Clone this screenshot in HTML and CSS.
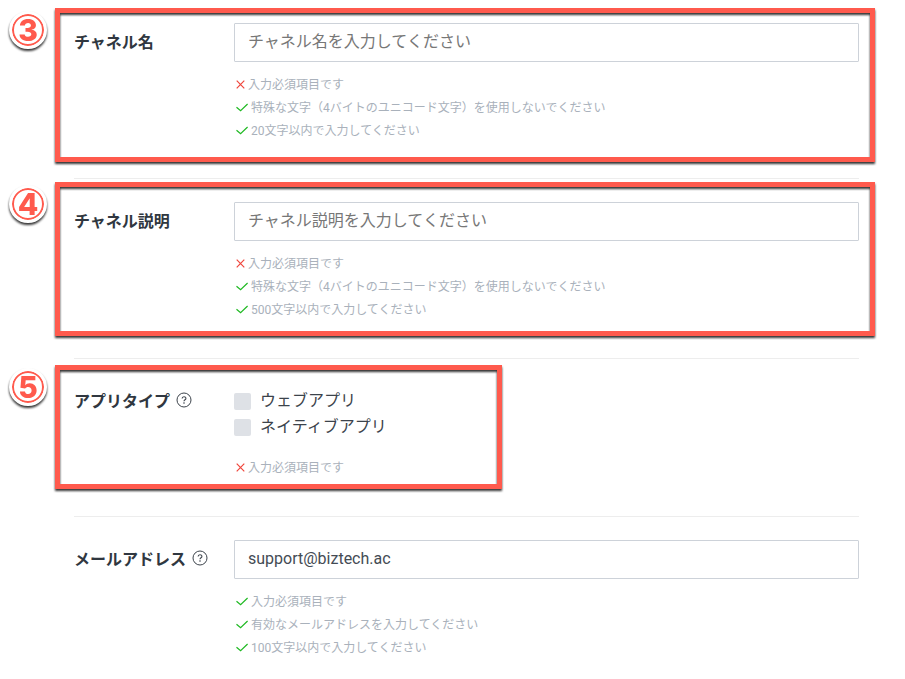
FILE: index.html
```html
<!DOCTYPE html>
<html lang="ja">
<head>
    <meta charset="UTF-8">
    <meta name="viewport" content="width=device-width, initial-scale=1.0">
    <title>チャネル作成</title>
    <link rel="stylesheet" href="styles.css">
</head>
<body>
    <!-- Shared icons -->
    <svg class="sprite" aria-hidden="true">
        <symbol id="icon-check" viewBox="0 0 12 12">
            <path d="M0.5 6.2 L4.6 9.8 L11.6 3" fill="none" stroke="#1fb922" stroke-width="1.2"/>
        </symbol>
        <symbol id="icon-cross" viewBox="0 0 9 12">
            <path d="M0.7 2.7 L8.3 10.3 M8.3 2.7 L0.7 10.3" fill="none" stroke="#f0463c" stroke-width="1.2"/>
        </symbol>
        <symbol id="icon-help" viewBox="0 0 16 16">
            <circle cx="8" cy="8" r="7" fill="none" stroke="#3c434b" stroke-width="1"/>
            <path d="M6.1 6.6 C6.1 4.2 9.9 4.2 9.9 6.4 C9.9 7.7 8 7.8 8 9.3" fill="none" stroke="#3c434b" stroke-width="1.1"/>
            <circle cx="8" cy="11" r="0.8" fill="#3c434b"/>
        </symbol>
    </svg>

    <form class="form">
        <div class="row">
            <div class="row-title">
                <label for="name">チャネル名</label>
            </div>
            <div class="row-body">
                <input class="text-input" type="text" id="name" placeholder="チャネル名を入力してください">
                <ul class="hints">
                    <li class="hint"><svg class="cross"><use href="#icon-cross"/></svg>入力必須項目です</li>
                    <li class="hint"><svg class="check"><use href="#icon-check"/></svg>特殊な文字（4バイトのユニコード文字）を使用しないでください</li>
                    <li class="hint"><svg class="check"><use href="#icon-check"/></svg>20文字以内で入力してください</li>
                </ul>
            </div>
            <div class="frame frame-name"><span class="badge">3</span></div>
        </div>

        <div class="row">
            <div class="row-title">
                <label for="description">チャネル説明</label>
            </div>
            <div class="row-body">
                <input class="text-input" type="text" id="description" placeholder="チャネル説明を入力してください">
                <ul class="hints">
                    <li class="hint"><svg class="cross"><use href="#icon-cross"/></svg>入力必須項目です</li>
                    <li class="hint"><svg class="check"><use href="#icon-check"/></svg>特殊な文字（4バイトのユニコード文字）を使用しないでください</li>
                    <li class="hint"><svg class="check"><use href="#icon-check"/></svg>500文字以内で入力してください</li>
                </ul>
            </div>
            <div class="frame frame-description"><span class="badge">4</span></div>
        </div>

        <div class="row">
            <div class="row-title">
                <span id="type-title">アプリタイプ</span>
                <svg class="help"><use href="#icon-help"/></svg>
            </div>
            <div class="row-body">
                <div class="options" role="group" aria-labelledby="type-title">
                    <label class="option" for="web"><input type="checkbox" id="web">ウェブアプリ</label>
                    <label class="option" for="native"><input type="checkbox" id="native">ネイティブアプリ</label>
                </div>
                <ul class="hints">
                    <li class="hint"><svg class="cross"><use href="#icon-cross"/></svg>入力必須項目です</li>
                </ul>
            </div>
            <div class="frame frame-type"><span class="badge">5</span></div>
        </div>

        <div class="row">
            <div class="row-title">
                <label for="email">メールアドレス</label>
                <svg class="help"><use href="#icon-help"/></svg>
            </div>
            <div class="row-body">
                <input class="text-input" type="email" id="email" value="support@biztech.ac">
                <ul class="hints">
                    <li class="hint"><svg class="check"><use href="#icon-check"/></svg>入力必須項目です</li>
                    <li class="hint"><svg class="check"><use href="#icon-check"/></svg>有効なメールアドレスを入力してください</li>
                    <li class="hint"><svg class="check"><use href="#icon-check"/></svg>100文字以内で入力してください</li>
                </ul>
            </div>
        </div>
    </form>
</body>
</html>
```
FILE: styles.css
```css
* {
    margin: 0;
    padding: 0;
    box-sizing: border-box;
}

body {
    font-family: Roboto, "Noto Sans CJK JP", sans-serif;
    font-size: 16px;
    color: #3c434b;
    background: #fff;
}

.sprite {
    display: none;
}

.form {
    padding: 0 46px 0 74px;
}

.row {
    position: relative;
    display: grid;
    grid-template-columns: 160px 1fr;
    padding: 23px 0 38px;
    border-bottom: 1px solid #ededed;
}

.row:first-child {
    padding-bottom: 37px;
}

.row:last-child {
    padding-bottom: 20px;
    border-bottom: none;
}

.row-title {
    display: flex;
    align-items: center;
    gap: 6px;
    height: 35px;
    font-weight: 700;
    color: #303740;
}

.help {
    width: 16px;
    height: 16px;
}

.text-input {
    display: block;
    width: 100%;
    height: 39px;
    padding: 0 13px 2px;
    border: 1px solid #cdd2d9;
    border-radius: 1px;
    font: inherit;
    color: #444b54;
    background: #fff;
}

.text-input::placeholder {
    color: #777;
    opacity: 1;
}

.hints {
    margin-top: 10px;
    padding-left: 2px;
    list-style: none;
}

.hint {
    display: flex;
    align-items: center;
    gap: 3px;
    height: 23px;
    font-size: 12px;
    color: #a9b1bb;
}

.check {
    width: 12px;
    height: 12px;
}

.cross {
    width: 9px;
    height: 12px;
}

.options {
    padding: 4px 0 7px;
}

.option {
    display: flex;
    align-items: center;
    gap: 9px;
    height: 26px;
}

.option input {
    appearance: none;
    width: 17px;
    height: 17px;
    margin-top: 5px;
    border-radius: 2px;
    background: #dee1e6;
}

/* Callout frames drawn over the rows */
.frame {
    position: absolute;
    left: -19px;
    right: -16px;
    height: 154px;
    border: 5px solid #ff5a4d;
    filter: drop-shadow(0 2px 1px rgba(0, 0, 0, 0.8));
    pointer-events: none;
}

.frame-name {
    top: 8px;
}

.frame-description {
    top: 3px;
}

.frame-type {
    top: 6px;
    right: auto;
    width: 447px;
    height: 124px;
}

.badge {
    position: absolute;
    top: -2px;
    left: -51px;
    display: flex;
    align-items: center;
    justify-content: center;
    width: 38px;
    height: 38px;
    border: 3px solid #fff;
    border-radius: 50%;
    background: #fff;
    box-shadow: inset 0 0 0 2px #ff5a4d;
    font-family: Inter, sans-serif;
    font-size: 30px;
    font-weight: 800;
    line-height: 1;
    color: #ff5a4d;
}
```
